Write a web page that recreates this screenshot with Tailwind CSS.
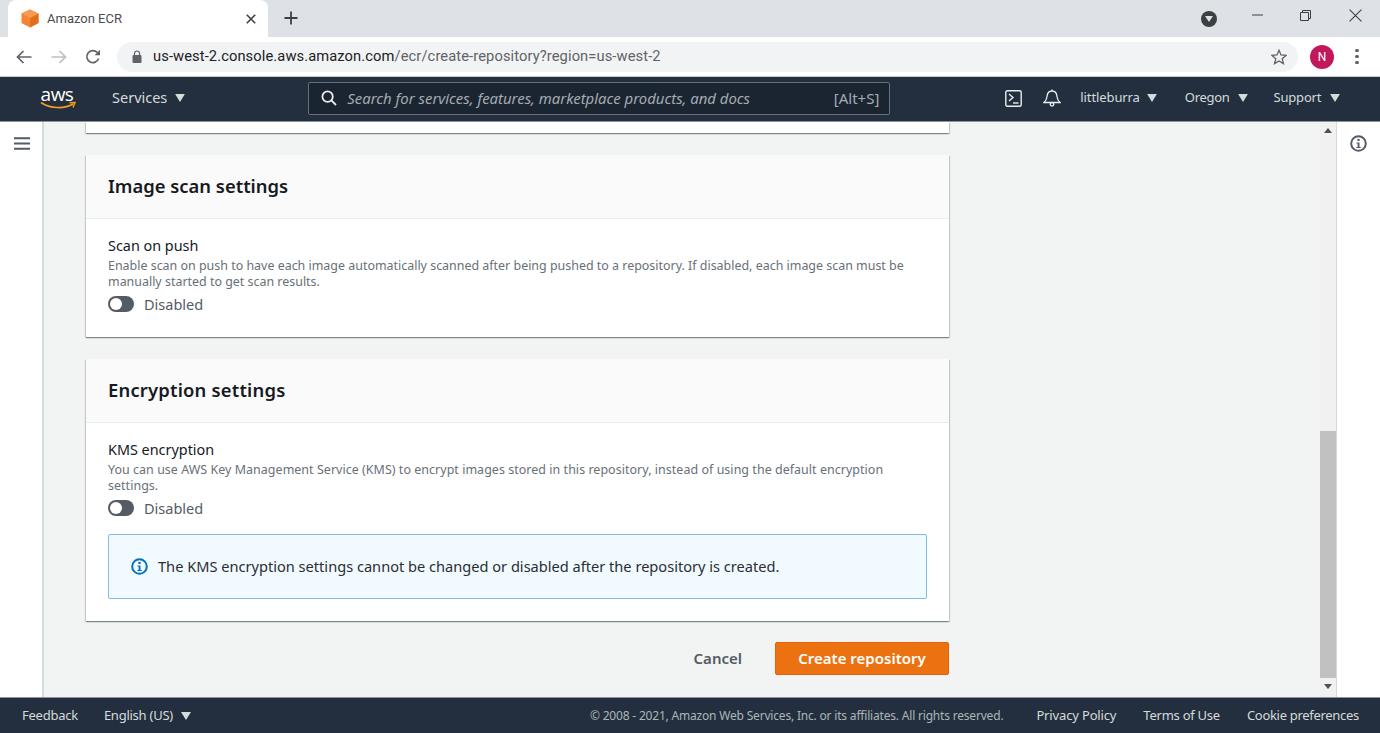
<!DOCTYPE html>
<html>
<head>
    <meta charset="utf-8">
    <script src="https://cdn.jsdelivr.net/npm/@tailwindcss/browser@4"></script>
</head>
<body class="w-[1380px] h-[733px] overflow-hidden bg-white font-['Noto_Sans',sans-serif] text-[#16191f]">

    <!-- Browser tab strip -->
    <div class="h-[37px] bg-[#dee1e6] flex items-end relative">
        <div class="ml-[8px] w-[260px] h-[37px] mt-0 bg-white rounded-t-[8px] flex items-center pl-[13px] pr-[10px] font-['Roboto',sans-serif]">
            <svg class="w-[18px] h-[19px]" viewBox="0 0 18 19"><path d="M9 0.5 L17.5 4.5 V14 L9 18.5 L0.5 14 V4.5 Z" fill="#f58534"/><path d="M9 9 L17.5 4.5 V14 L9 18.5 Z" fill="#e0701e"/><path d="M9 0.5 L17.5 4.5 L9 9 L0.5 4.5 Z" fill="#f79a52"/></svg>
            <span class="ml-[8px] text-[13px] text-[#4a4d51] flex-1">Amazon ECR</span>
            <svg class="w-[10px] h-[10px] mr-[2px]" viewBox="0 0 10 10"><path d="M0.8 0.8 L9.2 9.2 M9.2 0.8 L0.8 9.2" stroke="#3c4043" stroke-width="1.6"/></svg>
        </div>
        <svg class="ml-[16px] mb-[12px] w-[14px] h-[14px]" viewBox="0 0 14 14"><path d="M7 0.5 V13.5 M0.5 7 H13.5" stroke="#3c4043" stroke-width="1.8"/></svg>
        <div class="flex-1"></div>
        <div class="flex items-center h-[37px] pb-[1px]">
            <div class="w-[16px] h-[16px] rounded-full bg-[#3c4043] flex items-center justify-center mt-[2px]">
                <svg class="w-[8px] h-[6px]" viewBox="0 0 8 6"><path d="M0 0 H8 L4 6 Z" fill="#dee1e6"/></svg>
            </div>
            <svg class="ml-[35px] mb-[6px] w-[11px] h-[2px]" viewBox="0 0 11 2"><path d="M0 1 H11" stroke="#3c4043" stroke-width="1"/></svg>
            <svg class="ml-[37px] mb-[6px] w-[11px] h-[11px]" viewBox="0 0 11 11" fill="none" stroke="#3c4043" stroke-width="1"><path d="M0.5 2.5 H8.5 V10.5 H0.5 Z M2.5 2.5 V0.5 H10.5 V8.5 H8.5"/></svg>
            <svg class="ml-[38px] mr-[18px] mb-[6px] w-[13px] h-[13px]" viewBox="0 0 12 12" fill="none" stroke="#3c4043" stroke-width="1"><path d="M0.5 0.5 L11.5 11.5 M11.5 0.5 L0.5 11.5"/></svg>
        </div>
    </div>

    <!-- Browser toolbar -->
    <div class="h-[40px] bg-white border-b border-[#c8cace] flex items-center">
        <svg class="ml-[16px] w-[16px] h-[14px]" viewBox="0 0 16 14" fill="none" stroke="#5f6368" stroke-width="1.7"><path d="M15.5 7 H1.5 M7.5 1 L1.5 7 L7.5 13"/></svg>
        <svg class="ml-[19px] w-[16px] h-[14px]" viewBox="0 0 16 14" fill="none" stroke="#bcbfc3" stroke-width="1.7"><path d="M0.5 7 H14.5 M8.5 1 L14.5 7 L8.5 13"/></svg>
        <svg class="ml-[18px] w-[16px] h-[16px]" viewBox="0 0 16 16" fill="none"><path d="M13.6 9.5 A6 6 0 1 1 12.2 3.4" stroke="#5f6368" stroke-width="1.7"/><path d="M15 0.8 V6.3 H9.5 Z" fill="#5f6368"/></svg>
        <div class="ml-[16px] w-[1181px] h-[30px] rounded-full bg-[#f1f3f4] flex items-center pl-[15px] pr-[11px]">
            <svg class="w-[10px] h-[13px]" viewBox="0 0 10 13"><path d="M2.5 5 V3.5 A2.5 2.5 0 0 1 7.5 3.5 V5" fill="none" stroke="#5f6368" stroke-width="1.2"/><rect x="0.5" y="5" width="9" height="8" rx="1" fill="#5f6368"/></svg>
            <span class="ml-[11px] text-[14.7px] tracking-[0.1px] font-['Roboto',sans-serif] text-[#202124] flex-1">us-west-2.console.aws.amazon.com<span class="text-[#5f6368]">/ecr/create-repository?region=us-west-2</span></span>
            <svg class="w-[16px] h-[16px]" viewBox="0 0 16 16" fill="none" stroke="#5f6368" stroke-width="1.3"><path d="M8 1.3 L10 6 L15 6.4 L11.2 9.7 L12.4 14.6 L8 12 L3.6 14.6 L4.8 9.7 L1 6.4 L6 6 Z"/></svg>
        </div>
        <div class="ml-[12px] w-[24px] h-[24px] rounded-full bg-[#c2185b] text-white text-[12px] font-['Roboto',sans-serif] flex items-center justify-center">N</div>
        <div class="ml-[21px] flex flex-col gap-[2.5px]">
            <div class="w-[3.5px] h-[3.5px] rounded-full bg-[#5f6368]"></div>
            <div class="w-[3.5px] h-[3.5px] rounded-full bg-[#5f6368]"></div>
            <div class="w-[3.5px] h-[3.5px] rounded-full bg-[#5f6368]"></div>
        </div>
    </div>

    <!-- AWS console nav -->
    <div class="h-[45px] bg-[#232f3e] flex items-center pb-[2px] text-[14.5px] text-[#d5dbdb] border-b border-[#8d9399]">
        <div class="ml-[40px] w-[36px] h-[26px] relative text-white">
            <div class="text-[19px] leading-[18px] text-center font-['Open_Sans',sans-serif] tracking-[-0.5px] mr-[2px]">aws</div>
            <svg class="absolute left-0 top-[16px] w-[36px] h-[9px]" viewBox="0 0 36 9" fill="none"><path d="M1 1.5 C10 8 25 8 33 3" stroke="#f59e1f" stroke-width="1.6"/><path d="M29.5 1.8 L35 1.5 L33 6.5" stroke="#f59e1f" stroke-width="1.4"/></svg>
        </div>
        <span class="ml-[36px]">Services</span>
        <svg class="ml-[8px] w-[10px] h-[8px]" viewBox="0 0 11 9"><path d="M0 0 H11 L5.5 9 Z" fill="#d5dbdb"/></svg>
        <div class="ml-[123px] w-[582px] h-[33px] bg-[#1b2532] border border-[#687078] rounded-[2px] flex items-center pl-[12px] pr-[10px]">
            <svg class="w-[16px] h-[16px]" viewBox="0 0 16 16" fill="none" stroke="#e9ebed" stroke-width="1.8"><circle cx="6.6" cy="6.6" r="5.2"/><path d="M10.4 10.4 L15 15"/></svg>
            <span class="ml-[10px] italic text-[14.9px] text-[#a5abb0] flex-1">Search for services, features, marketplace products, and docs</span>
            <span class="text-[#a5abb0] text-[15px]">[Alt+S]</span>
        </div>
        <svg class="ml-[115px] w-[17px] h-[17px]" viewBox="0 0 17 17" fill="none" stroke="#eaeded" stroke-width="1.4"><rect x="0.8" y="0.8" width="15.4" height="15.4" rx="1.5"/><path d="M4 4 L8 7.5 L4 11"/><path d="M8 13 H13.5"/></svg>
        <svg class="ml-[21px] w-[18px] h-[18px]" viewBox="0 0 18 18" fill="none" stroke="#eaeded" stroke-width="1.3"><path d="M1 13.5 C3.5 11.5 3.8 9.5 4 7.5 C4.3 4 6.5 2 9 2 C11.5 2 13.7 4 14 7.5 C14.2 9.5 14.5 11.5 17 13.5 Z"/><path d="M9 0.5 V2"/><circle cx="9" cy="15.3" r="1.8"/></svg>
        <span class="ml-[19px] text-[13px] tracking-[-0.1px]">littleburra</span>
        <svg class="ml-[7px] w-[10px] h-[8px]" viewBox="0 0 11 9"><path d="M0 0 H11 L5.5 9 Z" fill="#d5dbdb"/></svg>
        <span class="ml-[28px] text-[13px] tracking-[-0.3px]">Oregon</span>
        <svg class="ml-[8px] w-[10px] h-[8px]" viewBox="0 0 11 9"><path d="M0 0 H11 L5.5 9 Z" fill="#d5dbdb"/></svg>
        <span class="ml-[26px] text-[13px] tracking-[-0.2px]">Support</span>
        <svg class="ml-[9px] w-[10px] h-[8px]" viewBox="0 0 11 9"><path d="M0 0 H11 L5.5 9 Z" fill="#d5dbdb"/></svg>
    </div>

    <!-- Console body -->
    <div class="h-[575px] flex bg-[#f2f3f3]">
        <div class="w-[44px] bg-white border-r-2 border-[#d5dbdb] pl-[14px] pt-[15px] shrink-0">
            <svg class="w-[16px] h-[13px]" viewBox="0 0 16 13"><path d="M0 1.2 H16 M0 6.5 H16 M0 11.8 H16" stroke="#545b64" stroke-width="2"/></svg>
        </div>

        <div class="w-[1276px] pl-[42px] shrink-0">
            <div class="w-[863px] h-[11px] bg-white shadow-[0_1px_1px_0_rgba(0,28,36,0.3),1px_1px_1px_0_rgba(0,28,36,0.15),-1px_1px_1px_0_rgba(0,28,36,0.15)]"></div>

            <div class="mt-[22px] w-[863px] h-[182px] bg-white shadow-[0_1px_1px_0_rgba(0,28,36,0.3),1px_1px_1px_0_rgba(0,28,36,0.15),-1px_1px_1px_0_rgba(0,28,36,0.15)]">
                <div class="h-[64px] bg-[#fafafa] border-b border-[#eaeded] px-[22px] pb-[2px] flex items-center">
                    <h2 class="text-[18.4px] font-semibold">Image scan settings</h2>
                </div>
                <div class="px-[22px] pt-[17px]">
                    <div class="text-[14.4px] leading-[20px] mb-[2px]">Scan on push</div>
                    <p class="text-[12.45px] leading-[16px] text-[#687078]">Enable scan on push to have each image automatically scanned after being pushed to a repository. If disabled, each image scan must be manually started to get scan results.</p>
                    <div class="flex items-center mt-[4px]">
                        <div class="w-[26px] h-[16px] rounded-full bg-[#545b64] p-[2px]"><div class="w-[12px] h-[12px] rounded-full bg-white"></div></div>
                        <span class="ml-[10px] text-[14.5px] leading-[20px] text-[#545b64]">Disabled</span>
                    </div>
                </div>
            </div>

            <div class="mt-[22px] w-[863px] h-[262px] bg-white shadow-[0_1px_1px_0_rgba(0,28,36,0.3),1px_1px_1px_0_rgba(0,28,36,0.15),-1px_1px_1px_0_rgba(0,28,36,0.15)]">
                <div class="h-[64px] bg-[#fafafa] border-b border-[#eaeded] px-[22px] pb-[2px] flex items-center">
                    <h2 class="text-[18.4px] font-semibold tracking-[0.2px]">Encryption settings</h2>
                </div>
                <div class="px-[22px] pt-[17px]">
                    <div class="text-[14.4px] leading-[20px] mb-[2px]">KMS encryption</div>
                    <p class="text-[12.45px] leading-[16px] tracking-[0.05px] text-[#687078]">You can use AWS Key Management Service (KMS) to encrypt images stored in this repository, instead of using the default encryption settings.</p>
                    <div class="flex items-center mt-[4px]">
                        <div class="w-[26px] h-[16px] rounded-full bg-[#545b64] p-[2px]"><div class="w-[12px] h-[12px] rounded-full bg-white"></div></div>
                        <span class="ml-[10px] text-[14.5px] leading-[20px] text-[#545b64]">Disabled</span>
                    </div>
                    <div class="mt-[16px] h-[65px] border border-[#7fbde3] rounded-[2px] bg-[#f1faff] flex items-center pl-[22px]">
                        <svg class="w-[17px] h-[17px]" viewBox="0 0 17 17" fill="none"><circle cx="8.5" cy="8.5" r="7.3" stroke="#0073bb" stroke-width="2"/><rect x="7.4" y="3.8" width="2.2" height="2.2" fill="#0073bb"/><path d="M6.5 7.5 H9.5 V12 H10.8 V13 H6.3 V12 H7.6 V8.5 H6.5 Z" fill="#0073bb"/></svg>
                        <span class="ml-[10px] text-[14.6px] text-[#2a2e33]">The KMS encryption settings cannot be changed or disabled after the repository is created.</span>
                    </div>
                </div>
            </div>

            <div class="mt-[21px] w-[863px] flex items-center justify-end">
                <span class="text-[15px] font-semibold text-[#545b64] mr-[33px]">Cancel</span>
                <div class="w-[174px] h-[33px] bg-[#ec7211] border border-[#eb5f07] rounded-[2px] text-white text-[15px] font-semibold flex items-center justify-center">Create repository</div>
            </div>
        </div>

        <!-- Scrollbar -->
        <div class="w-[16px] bg-[#f1f1f1] flex flex-col items-center shrink-0">
            <svg class="mt-[6px] w-[8px] h-[5px]" viewBox="0 0 8 5"><path d="M0 5 L4 0 L8 5 Z" fill="#505050"/></svg>
            <div class="mt-[298px] w-[16px] h-[247px] bg-[#c1c1c1]"></div>
            <svg class="mt-[6px] w-[8px] h-[5px]" viewBox="0 0 8 5"><path d="M0 0 L4 5 L8 0 Z" fill="#505050"/></svg>
        </div>

        <div class="w-[44px] bg-white border-l border-[#d5dbdb] pl-[13px] pt-[13px] shrink-0">
            <svg class="w-[17px] h-[17px]" viewBox="0 0 17 17" fill="none"><circle cx="8.5" cy="8.5" r="7.3" stroke="#545b64" stroke-width="2"/><rect x="7.4" y="3.8" width="2.2" height="2.2" fill="#545b64"/><path d="M6.5 7.5 H9.5 V12 H10.8 V13 H6.3 V12 H7.6 V8.5 H6.5 Z" fill="#545b64"/></svg>
        </div>
    </div>

    <!-- Footer -->
    <div class="h-[36px] bg-[#232f3e] border-t border-[#8d9399] flex items-center text-[13px] text-[#d5dbdb]">
        <span class="ml-[22px] tracking-[-0.25px]">Feedback</span>
        <span class="ml-[26px] tracking-[-0.25px]">English (US)</span>
        <svg class="ml-[8px] w-[10px] h-[8px]" viewBox="0 0 10 8"><path d="M0 0 H10 L5 8 Z" fill="#d5dbdb"/></svg>
        <span class="ml-auto text-[12px] text-[#aab7b8] tracking-[-0.19px]">© 2008 - 2021, Amazon Web Services, Inc. or its affiliates. All rights reserved.</span>
        <span class="ml-[33px] tracking-[-0.15px]">Privacy Policy</span>
        <span class="ml-[27px] tracking-[-0.25px]">Terms of Use</span>
        <span class="ml-[27px] mr-[21px] tracking-[-0.3px]">Cookie preferences</span>
    </div>
</body>
</html>
